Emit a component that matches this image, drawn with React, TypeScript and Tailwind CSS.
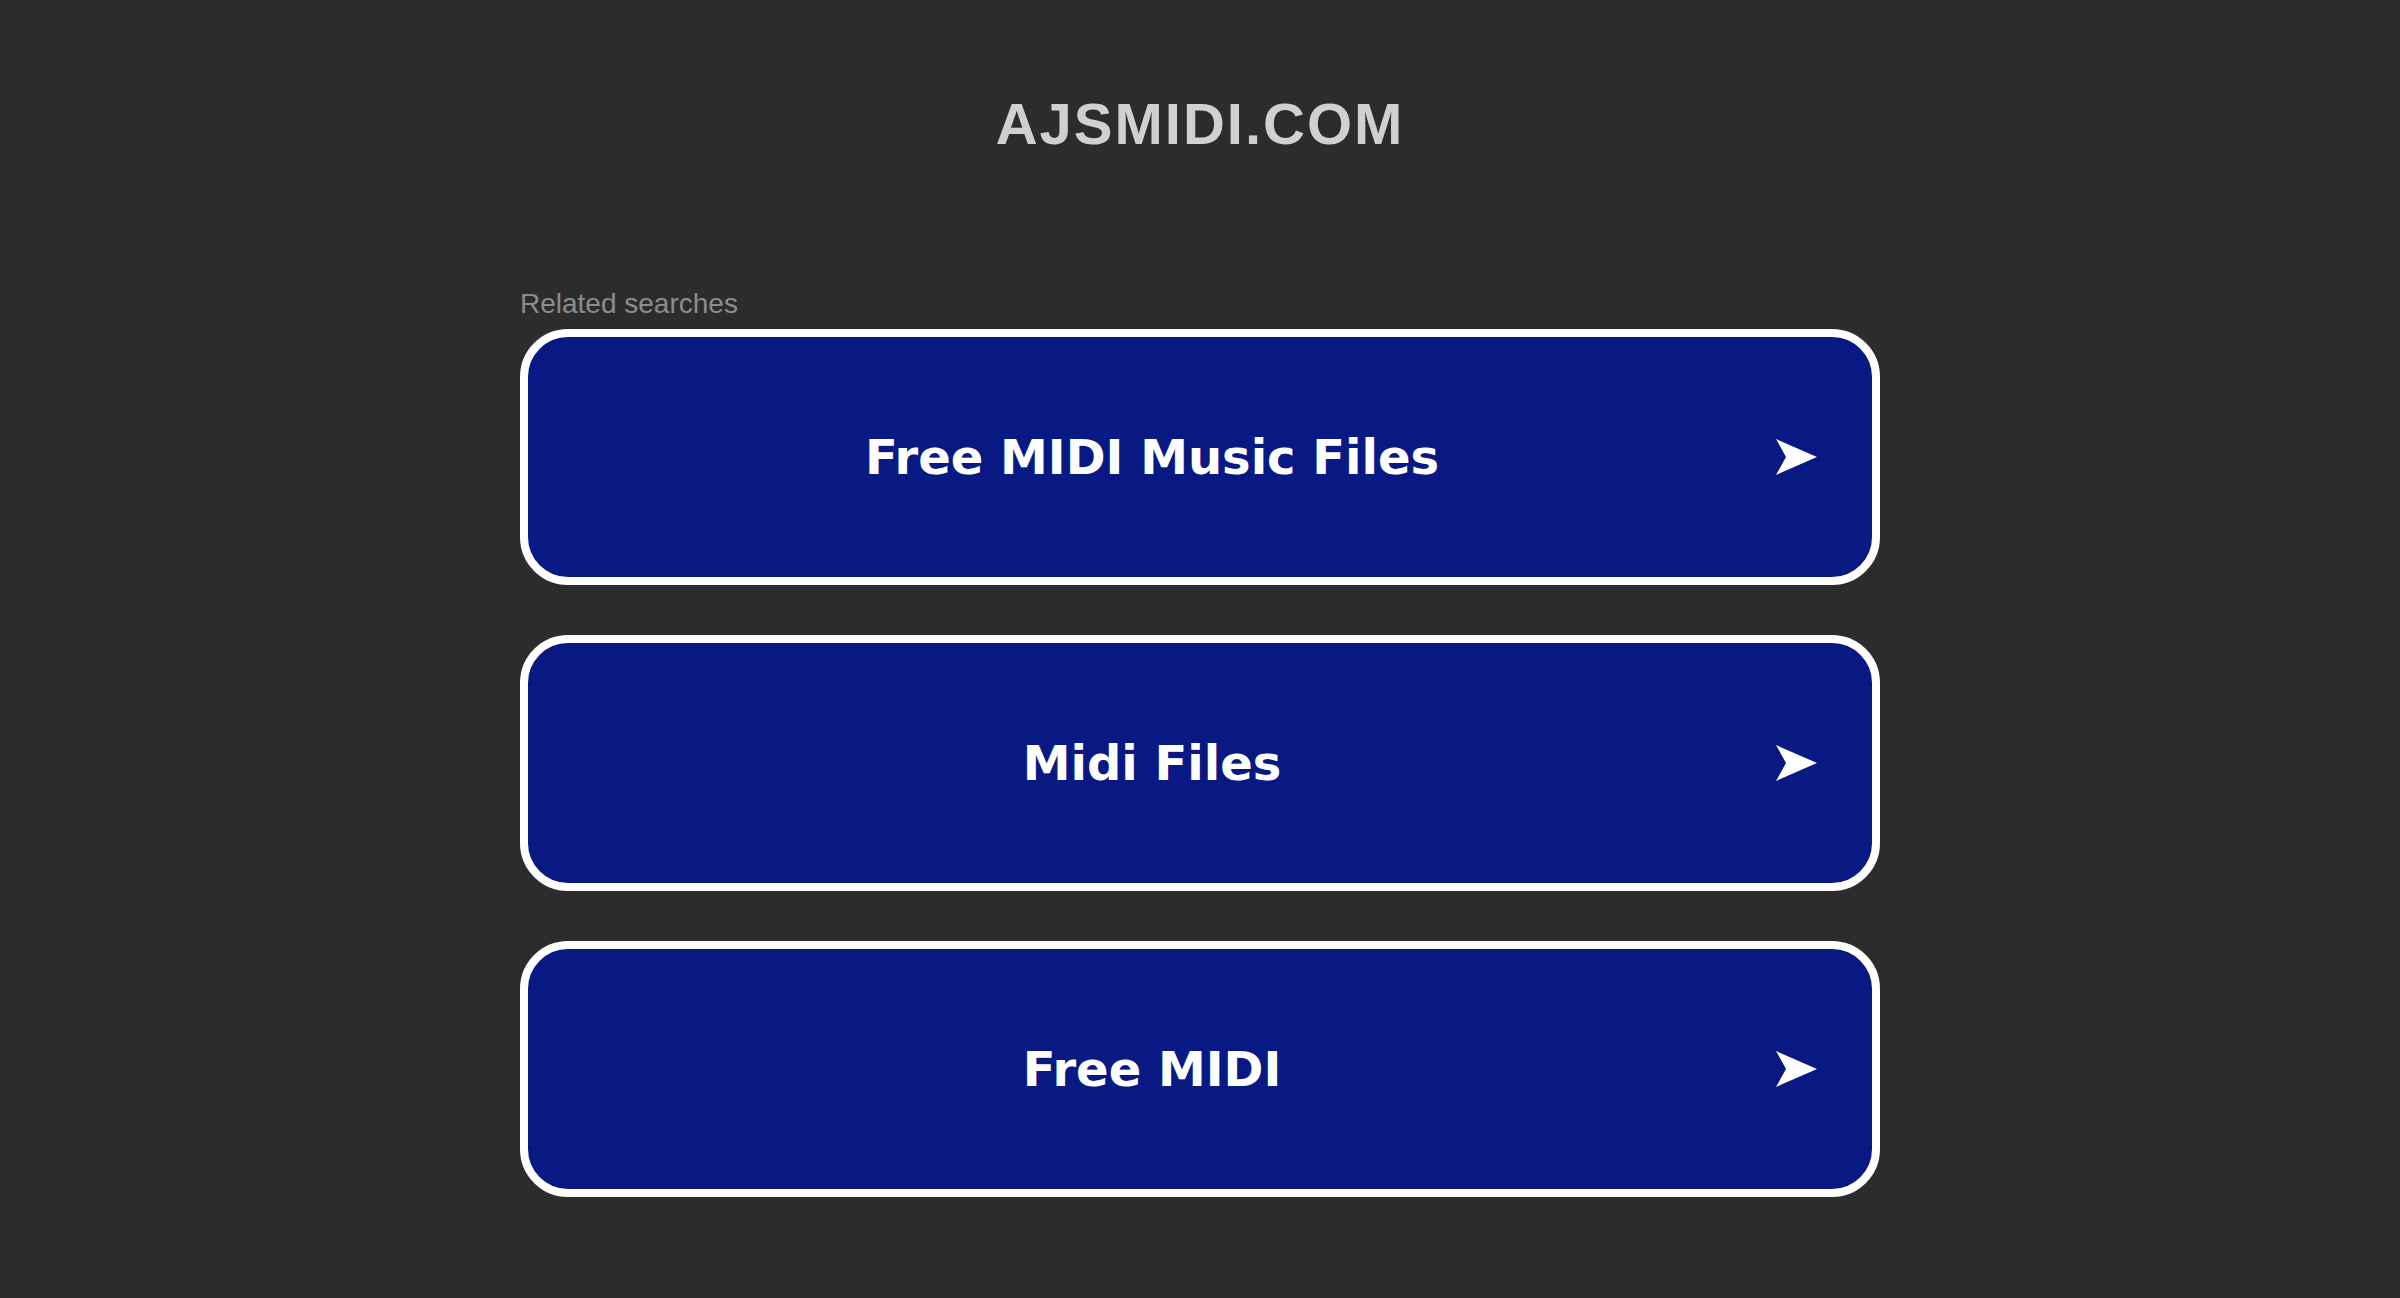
const searches = ['Free MIDI Music Files', 'Midi Files', 'Free MIDI'];

function Arrow() {
  return (
    <svg width="41" height="36" viewBox="0 0 41 36" className="block">
      <polygon points="0,0 41,18 0,36 10,18" fill="#ffffff" />
    </svg>
  );
}

export default function App() {
  return (
    <div className="min-h-screen bg-[#2c2c2c] pt-[90px]">
      {/* Header */}
      <h1 className="text-center font-['Liberation_Sans',Arial,sans-serif] text-[58px] leading-[67px] font-bold tracking-[2px] text-[#d0d0d0]">
        AJSMIDI.COM
      </h1>

      {/* Related searches */}
      <div className="mx-auto mt-[131px] w-[1360px]">
        <p className="mb-[9px] font-['Liberation_Sans',Arial,sans-serif] text-[28px] leading-[32px] text-[#8c8c8c]">
          Related searches
        </p>

        <div className="flex flex-col gap-[50px]">
          {searches.map((label) => (
            <a
              key={label}
              href="#"
              className="flex h-[256px] items-center rounded-[48px] border-8 border-white bg-[#081983]"
            >
              <div className="flex flex-1 justify-center">
                <span className="font-['DejaVu_Sans',Verdana,sans-serif] text-[48px] leading-none font-bold whitespace-nowrap text-white">
                  {label}
                </span>
              </div>
              <div className="flex w-[96px] items-center">
                <Arrow />
              </div>
            </a>
          ))}
        </div>
      </div>
    </div>
  );
}
